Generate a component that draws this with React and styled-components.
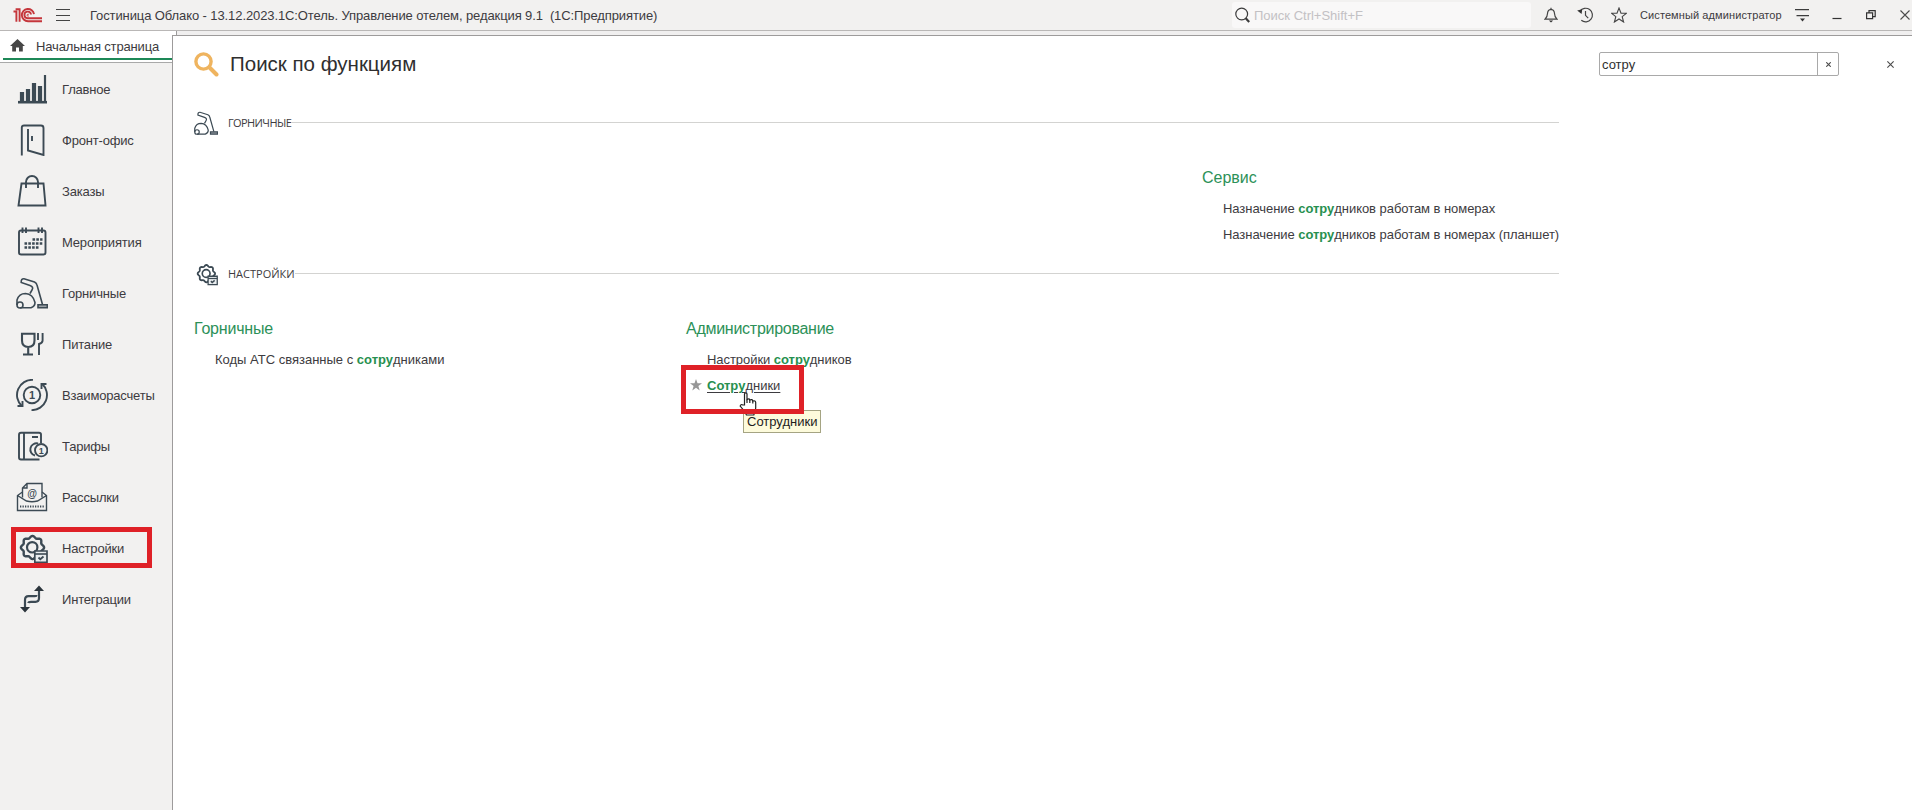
import styled, { createGlobalStyle, css } from "styled-components";

const GlobalStyle = createGlobalStyle`
  * {
    box-sizing: border-box;
  }
  body {
    margin: 0;
    overflow: hidden;
    background: #fff;
    color: #3d3b40;
    font-family: "Liberation Sans", Arial, sans-serif;
    font-size: 13px;
  }
`;

const Container = styled.div`
  width: 100vw;
  height: 100vh;
  display: flex;
  flex-direction: column;
`;

const TitleBar = styled.header`
  height: 31px;
  flex-shrink: 0;
  display: flex;
  align-items: center;
  padding-left: 13px;
  background: #f2f1f0;
  border-bottom: 1px solid #b9b7b6;
  svg {
    display: block;
    flex-shrink: 0;
  }
`;

const Burger = styled.div`
  width: 14px;
  height: 12px;
  margin: 0 20px 0 14px;
  border-top: 1px solid #444;
  border-bottom: 1px solid #444;
  display: flex;
  align-items: center;
  &::before {
    content: "";
    width: 100%;
    height: 1px;
    background: #444;
  }
`;

const AppTitle = styled.div`
  flex: 1;
  white-space: pre;
  letter-spacing: -0.1px;
`;

const GlobalSearch = styled.div`
  width: 299px;
  height: 26px;
  display: flex;
  align-items: center;
  padding-left: 3px;
  gap: 4px;
  border-radius: 3px;
  background: #f9f8f8;
  color: #c3c1c4;
`;

const Tools = styled.div`
  width: 381px;
  height: 30px;
  display: flex;
  align-items: center;
  padding-left: 13px;
`;

const ToolIcon = styled.div`
  width: 16px;
  flex-shrink: 0;
  margin-right: ${(props) => props.$gap || 18}px;
`;

const UserName = styled.div`
  width: 155px;
  font-size: 11px;
  letter-spacing: 0.1px;
  white-space: nowrap;
`;

const Body = styled.div`
  flex: 1;
  display: flex;
  min-height: 0;
`;

const Sidebar = styled.nav`
  width: 172px;
  flex-shrink: 0;
  background: #f2f1f0;
`;

const HomeTab = styled.div`
  height: 32px;
  padding-left: 3px;
  background: #fff;
  border-bottom: 1px solid #a9a9a9;
`;

const HomeTabInner = styled.div`
  height: 29px;
  display: flex;
  align-items: center;
  padding: 3px 0 0 7px;
  gap: 11px;
  border-bottom: 2px solid #1d8857;
  letter-spacing: -0.15px;
  white-space: nowrap;
  svg {
    margin-bottom: 2px;
  }
`;

const Menu = styled.div`
  padding: 1px 0 0 11px;
`;

const MenuItem = styled.div`
  width: 141px;
  height: 51px;
  display: flex;
  align-items: center;
  padding-left: 5px;
  gap: 14px;
  position: relative;
  letter-spacing: -0.18px;
  white-space: nowrap;
  svg {
    display: block;
    flex-shrink: 0;
    margin-bottom: 1px;
  }
  ${(props) =>
    props.$marked &&
    css`
      &::after {
        content: "";
        position: absolute;
        inset: 4px 0 6px 0;
        border: 5px solid #df2127;
      }
    `}
`;

const Main = styled.main`
  flex: 1;
  display: flex;
  flex-direction: column;
`;

const Strip = styled.div`
  height: 4px;
  background: #f0efef;
  &::before {
    content: "";
    display: block;
    width: 4px;
    height: 4px;
    background: #fff;
    border-right: 1px solid #9d9b9b;
  }
`;

const Panel = styled.section`
  flex: 1;
  padding: 12px 0 0 21px;
  border-top: 1px solid #9d9b9b;
  border-left: 1px solid #9d9b9b;
  background: #fff;
`;

const PanelHead = styled.div`
  height: 32px;
  display: flex;
  align-items: center;
  svg {
    display: block;
    flex-shrink: 0;
  }
`;

const Heading = styled.h1`
  margin: 0;
  width: 1380px;
  padding-left: 11px;
  font-size: 20.5px;
  font-weight: 400;
  color: #2f2f2f;
`;

const SearchField = styled.div`
  width: 240px;
  height: 24px;
  display: flex;
  border: 1px solid #a9a9a9;
  border-radius: 2px;
  color: #2f2f2f;
`;

const SearchText = styled.div`
  flex: 1;
  padding: 1px 0 0 2px;
  line-height: 22px;
`;

const ClearButton = styled.div`
  width: 21px;
  display: flex;
  align-items: center;
  justify-content: center;
  border-left: 1px solid #a9a9a9;
`;

const CloseButton = styled.div`
  margin-left: 48px;
`;

const Section = styled.div`
  width: 1365px;
  padding-top: 30px;
  & + & {
    padding-top: 13px;
  }
`;

const SectionHead = styled.div`
  height: 26px;
  display: flex;
  align-items: center;
  gap: 10px;
`;

const SectionName = styled.div`
  flex: 1;
  display: flex;
  align-items: center;
  font-family: "Open Sans", sans-serif;
  font-size: 11px;
  line-height: 16px;
  letter-spacing: ${(props) => props.$spacing}px;
  &::after {
    content: "";
    flex: 1;
    height: 1px;
    margin-bottom: 1px;
    background: #d3d3d1;
  }
`;

const Groups = styled.div`
  display: grid;
  grid-template-columns: 492px 516px 357px;
  padding-top: 32px;
`;

const Group = styled.div`
  grid-column: ${(props) => props.$column};
`;

const GroupTitle = styled.div`
  margin-bottom: 8px;
  font-size: 16px;
  line-height: 20px;
  letter-spacing: ${(props) => props.$spacing || 0}px;
  color: #2c9158;
`;

const Command = styled.div`
  height: 26px;
  line-height: 26px;
  padding-left: 21px;
  white-space: nowrap;
  letter-spacing: ${(props) => props.$spacing || 0}px;
  position: relative;
  b {
    color: #27904f;
  }
  u {
    text-underline-offset: 2px;
  }
`;

const Star = styled.svg`
  position: absolute;
  left: 4px;
  top: 6px;
`;

const Frame = styled.div`
  position: absolute;
  left: -5px;
  top: -8px;
  width: 123px;
  height: 49px;
  border: 5px solid #df2127;
`;

const Tooltip = styled.div`
  position: absolute;
  left: 57px;
  top: 37px;
  height: 23px;
  padding: 0 3px;
  line-height: 21px;
  border: 1px solid #a5a483;
  background: #fdfbdc;
  color: #1d1d1d;
`;

const Cursor = styled.svg`
  position: absolute;
  left: 53px;
  top: 19px;
`;

const Glyph = ({ size = 32, children }) => (
  <svg
    width={size}
    height={size}
    viewBox="0 0 32 32"
    fill="none"
    stroke="#3c4a54"
    strokeWidth="1.9"
  >
    {children}
  </svg>
);

const Digit = ({ x, y, size, children }) => (
  <text
    x={x}
    y={y}
    fontSize={size}
    fontWeight="700"
    textAnchor="middle"
    fill="#3c4a54"
    stroke="none"
  >
    {children}
  </text>
);

const Chart = () => (
  <Glyph>
    <path d="M2 29.2h29" strokeWidth="2.6" />
    <path d="M29 2v28" strokeWidth="2.2" />
    <path d="M6 28v-9M12 28V16M18 28V10M24 28V13" strokeWidth="4.2" />
  </Glyph>
);

const Door = () => (
  <Glyph>
    <path d="M5.8 31.5V3.5Q5.8 1.5 8 1.5H25Q27.5 1.5 27.5 4V31L12 26.5V5" />
    <path d="M16 12v5" />
  </Glyph>
);

const Bag = () => (
  <Glyph>
    <path d="M5.5 8.5H27.5L29.5 30.5H2.5Z" />
    <path d="M10 13V7a6 6 0 0 1 12 0v6" />
  </Glyph>
);

const Calendar = () => (
  <Glyph>
    <rect x="3" y="4.5" width="26.5" height="24" rx="2" />
    <path d="M6.5 1.5v5.5M10 1.5v5.5M22.5 1.5v5.5M26 1.5v5.5" />
    <path
      d="M16.5 13.5h10M8.5 17.5h18M8.5 21.5h14"
      strokeWidth="2.7"
      strokeDasharray="2.6 1.2"
    />
  </Glyph>
);

const Vacuum = ({ size }) => (
  <Glyph size={size}>
    <g strokeWidth="1.6">
      <path d="M26.5 27.5L21 8Q20.5 6 18.5 5L8 1.7Q5 1.5 5.2 5.5L14 8.5Q18 10 16 13L14 16.5" />
      <path d="M1 28V23Q3 16.5 9.5 16.5Q17 17 19 25.5Q19 29.5 15 30.8H4" />
      <circle cx="4" cy="28" r="3" />
      <path d="M22 27.8h9.3v3H22z" fill="#9aa1a6" />
    </g>
  </Glyph>
);

const Food = () => (
  <Glyph>
    <g strokeWidth="2.1">
      <path d="M6 5.7H18.5V12.5Q18.5 19 12.2 19Q6 19 6 12.5ZM12.2 19v7.5M7 26.5H17" />
      <path d="M22 5v7M26.6 5v7.5Q26.6 15 23 16V27" strokeWidth="1.9" />
    </g>
  </Glyph>
);

const Settlements = () => (
  <Glyph>
    <circle cx="16" cy="16" r="8.3" />
    <path d="M17 .9A15.1 15.1 0 0 0 6 27.2M15.5 31.1A15.1 15.1 0 0 0 26 4.8" />
    <path d="M1.5 27H6.5V22M30.5 5H25.5V10" />
    <Digit x={16} y={20} size={11}>1</Digit>
  </Glyph>
);

const Tariffs = () => (
  <Glyph>
    <path d="M25 13V4.5Q25 2.7 23 2.7H5Q3 2.7 3 5V27.5Q3 29.5 5 29.5H23.5M8 2.7v26.8M16 7h6" />
    <path d="M19 25.5A5.8 5.8 0 1 1 22 13.5" />
    <circle cx="25.2" cy="20.2" r="6.2" />
    <Digit x={25.2} y={23.5} size={9}>1</Digit>
  </Glyph>
);

const Mail = () => (
  <Glyph>
    <g strokeWidth="1.4">
      <path d="M6.5 16.5V7L11 2.5H26V16.5M6.5 7H11V2.5" />
      <path d="M6.5 11L1.5 14.5V29.5H30.5V14.5L26 11M1.5 14.5L10.5 20Q16 21.5 21.5 20L30.5 14.5" />
      <path d="M4 25.5H29" strokeWidth="2" strokeDasharray="1.3 1.2" />
    </g>
    <Digit x={16} y={15.5} size={10}>@</Digit>
  </Glyph>
);

// eight soft teeth around the centre
const gearOutline = Array.from({ length: 96 }, (_, i) => {
  const a = (i / 96) * Math.PI * 2;
  const r = 10.6 + 1 * Math.cos(8 * a);
  return `${(16.5 + r * Math.cos(a)).toFixed(2)},${(15.5 + r * Math.sin(a)).toFixed(2)}`;
}).join(" ");

const Gear = ({ size }) => (
  <Glyph size={size}>
    <polygon points={gearOutline} strokeWidth="2.4" strokeLinejoin="round" />
    <circle cx="16.2" cy="15.3" r="5.2" strokeWidth="2.2" />
    <path d="M18.8 19H31V30.3H18.8Z" fill="#e9edef" strokeWidth="1.7" />
    <path d="M18.5 22H31" strokeWidth="1.6" />
    <path d="M22.5 25.5L24.3 27.3L27.5 24.5" />
  </Glyph>
);

const Integrations = () => (
  <Glyph>
    <path d="M9 26V17Q9 13.2 12.5 13.2H19Q20.5 13.2 20.5 12" strokeWidth="2.2" />
    <path d="M23 7V15Q23 18.8 19.5 18.8H15Q12.5 18.8 12.2 20" strokeWidth="2.2" />
    <path d="M18 8L23 2.5L28 8ZM4 24L9 29.5L14 24Z" fill="#2c353c" stroke="none" />
  </Glyph>
);

const Logo = () => (
  <svg width="29" height="15" viewBox="0 0 29 15" fill="none" stroke="#c5363b" strokeWidth="1.9">
    <path d="M.5 3.5H3.4V13.8M2.6 1.3H6.6V13.8" />
    <path d="M21 6.2A6.1 6.1 0 1 0 15 13.2H29" />
    <path d="M18 6.5A3.3 3.3 0 1 0 15 10.2H29" />
    <path d="M15.8 7.8A1 1 0 1 1 15.8 6.5" strokeWidth="1" />
  </svg>
);

const Cross = ({ size, width = 1.1 }) => (
  <svg width={size} height={size} viewBox="0 0 10 10" stroke="#4b4b4b" strokeWidth={(width * 10) / size}>
    <path d="M.5 .5L9.5 9.5M9.5 .5L.5 9.5" />
  </svg>
);

const menu = [
  ["Главное", Chart],
  ["Фронт-офис", Door],
  ["Заказы", Bag],
  ["Мероприятия", Calendar],
  ["Горничные", Vacuum],
  ["Питание", Food],
  ["Взаиморасчеты", Settlements],
  ["Тарифы", Tariffs],
  ["Рассылки", Mail],
  ["Настройки", Gear],
  ["Интеграции", Integrations],
];

const Header = () => (
  <TitleBar>
    <Logo />
    <Burger />
    <AppTitle>
      {"Гостиница Облако - 13.12.2023.1С:Отель. Управление отелем, редакция 9.1  (1С:Предприятие)"}
    </AppTitle>
    <GlobalSearch>
      <svg width="15" height="16" viewBox="0 0 15 16" fill="none" stroke="#3c3c3c">
        <circle cx="6.7" cy="7" r="5.9" strokeWidth="1.2" />
        <path d="M10.5 11L14.2 15" strokeWidth="2.2" />
      </svg>
      Поиск Ctrl+Shift+F
    </GlobalSearch>
    <Tools>
      <ToolIcon $gap={17}>
        <svg width="14" height="16" viewBox="0 0 14 16" fill="none" stroke="#444" strokeWidth="1.2">
          <path d="M1 12.2Q3.4 10 3.5 6.5Q3.8 2.5 7 2.3Q10.2 2.5 10.5 6.5Q10.6 10 13 12.2ZM7 .7v1.6" />
          <path d="M4.8 13.5h4.4L7 15.6z" fill="#333" stroke="none" />
        </svg>
      </ToolIcon>
      <ToolIcon>
        <svg width="17" height="16" viewBox="0 0 17 16" fill="none" stroke="#444" strokeWidth="1.2">
          <path d="M3 4.2A6.8 6.8 0 1 1 4.3 13.3M8.5 4V8.3L11.2 11.2" />
          <path d="M.2 3.6L5.2 2.2L4.6 7Z" fill="#333" stroke="none" />
        </svg>
      </ToolIcon>
      <ToolIcon $gap={13}>
        <svg width="16" height="16" viewBox="0 0 16 16" fill="none" stroke="#444" strokeWidth="1.1">
          <path d="M8 1L10 6.1L15.3 6.3L11.2 9.7L12.6 15L8 12L3.4 15L4.8 9.7L.7 6.3L6 6.1Z" />
        </svg>
      </ToolIcon>
      <UserName>Системный администратор</UserName>
      <ToolIcon $gap={21}>
        <svg width="15" height="14" viewBox="0 0 15 14" stroke="#3c3c3c" strokeWidth="1.2">
          <path d="M0 1.6H14M1.5 7.6H14" />
          <path d="M5 10.5h5L7.5 13.5z" fill="#333" stroke="none" />
        </svg>
      </ToolIcon>
      <ToolIcon>
        <svg width="10" height="12" viewBox="0 0 10 12" stroke="#333">
          <path d="M.5 9.5H9.5" strokeWidth="1.2" />
        </svg>
      </ToolIcon>
      <ToolIcon>
        <svg width="10" height="10" viewBox="0 0 10 10" fill="none" stroke="#333" strokeWidth="1.2">
          <path d="M.6 2.8H6.6V8.6H.6ZM3 2.8V.7H9.2V6.6H6.6" />
        </svg>
      </ToolIcon>
      <Cross size={10} />
    </Tools>
  </TitleBar>
);

const App = () => {
  return (
    <Container>
      <GlobalStyle />
      <Header />
      <Body>
        <Sidebar>
          <HomeTab>
            <HomeTabInner>
              <svg width="15" height="13" viewBox="0 0 15 13" fill="#474747">
                <path d="M7.5 0L15 7H12.8V12.5H9V8.5H6V12.5H2.2V7H0Z" />
              </svg>
              Начальная страница
            </HomeTabInner>
          </HomeTab>
          <Menu>
            {menu.map(([name, Icon]) => (
              <MenuItem key={name} $marked={name === "Настройки"}>
                <Icon />
                {name}
              </MenuItem>
            ))}
          </Menu>
        </Sidebar>
        <Main>
          <Strip />
          <Panel>
            <PanelHead>
              <svg width="25" height="25" viewBox="0 0 25 25" fill="none" stroke="#efb45f">
                <circle cx="9.5" cy="9.5" r="7.6" strokeWidth="3.4" />
                <path d="M15.5 15.5L22.5 22.5" strokeWidth="4" strokeLinecap="round" />
              </svg>
              <Heading>Поиск по функциям</Heading>
              <SearchField>
                <SearchText>сотру</SearchText>
                <ClearButton>
                  <Cross size={5} />
                </ClearButton>
              </SearchField>
              <CloseButton>
                <Cross size={7} />
              </CloseButton>
            </PanelHead>
            <Section>
              <SectionHead>
                <Vacuum size={24} />
                <SectionName $spacing={-0.6}>ГОРНИЧНЫЕ</SectionName>
              </SectionHead>
              <Groups>
                <Group $column={3}>
                  <GroupTitle>Сервис</GroupTitle>
                  <Command $spacing={-0.05}>
                    Назначение <b>сотру</b>дников работам в номерах
                  </Command>
                  <Command $spacing={-0.05}>
                    Назначение <b>сотру</b>дников работам в номерах (планшет)
                  </Command>
                </Group>
              </Groups>
            </Section>
            <Section>
              <SectionHead>
                <Gear size={24} />
                <SectionName $spacing={0}>НАСТРОЙКИ</SectionName>
              </SectionHead>
              <Groups>
                <Group $column={1}>
                  <GroupTitle $spacing={-0.2}>Горничные</GroupTitle>
                  <Command>
                    Коды АТС связанные с <b>сотру</b>дниками
                  </Command>
                </Group>
                <Group $column={2}>
                  <GroupTitle $spacing={-0.27}>Администрирование</GroupTitle>
                  <Command $spacing={-0.05}>
                    Настройки <b>сотру</b>дников
                  </Command>
                  <Command>
                    <Star width="12" height="12" viewBox="0 0 12 12" fill="#979797">
                      <path d="M6 0L7.5 4.2H12L8.4 6.9L9.7 11.4L6 8.7L2.3 11.4L3.6 6.9L0 4.2H4.5Z" />
                    </Star>
                    <u>
                      <b>Сотру</b>дники
                    </u>
                    <Tooltip>Сотрудники</Tooltip>
                    <Cursor width="18" height="25" viewBox="0 0 18 25" fill="#fff" stroke="#222" strokeWidth="1.2">
                      <path d="M5.5 13V2Q5.5 .8 6.8 .8Q8 .8 8 2V7.5Q10.5 6 10.8 8Q13.2 6.8 13.8 9Q16.5 8.2 16.7 10.5V16Q16.5 19 14.8 23H7.5Q5 18 1.2 14.2Q1.5 12 4 13Z" />
                      <path d="M8 7.5v3.5M10.8 8v3M13.8 9v2.5" />
                    </Cursor>
                    <Frame />
                  </Command>
                </Group>
              </Groups>
            </Section>
          </Panel>
        </Main>
      </Body>
    </Container>
  );
};

export default App;
